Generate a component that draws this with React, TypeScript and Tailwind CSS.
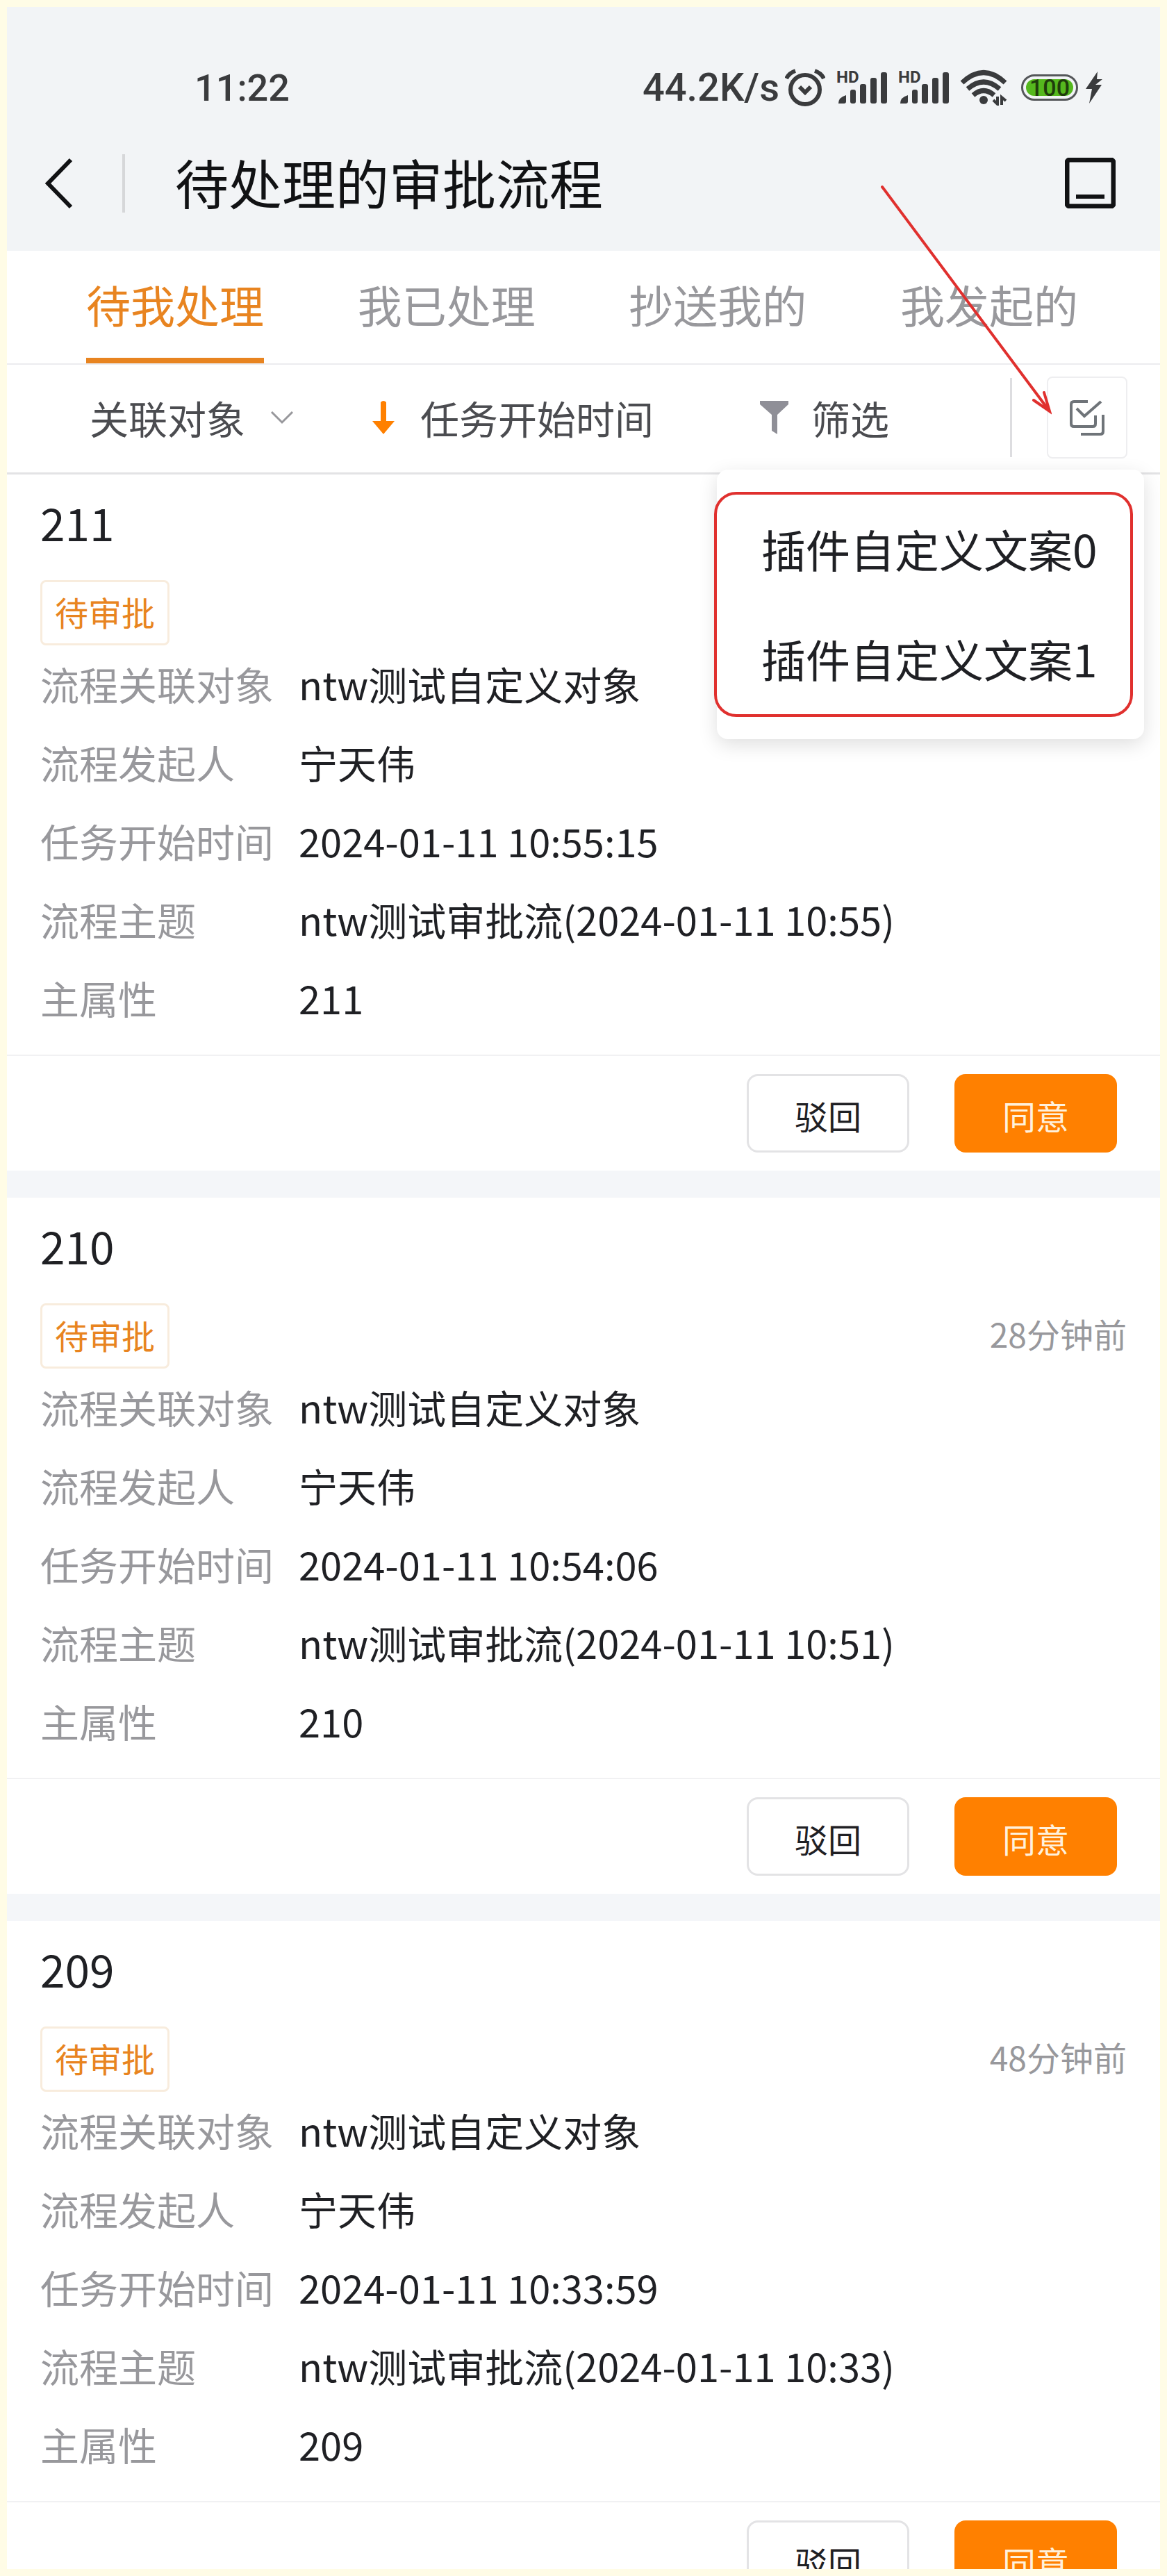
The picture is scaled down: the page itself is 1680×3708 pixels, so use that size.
import React from 'react';

const tabs = ['待我处理', '我已处理', '抄送我的', '我发起的'];

const menuItems = ['插件自定义文案0', '插件自定义文案1'];

const tasks = [
  { id: '211', ago: '', start: '2024-01-11 10:55:15', subject: 'ntw测试审批流(2024-01-11 10:55)' },
  { id: '210', ago: '28分钟前', start: '2024-01-11 10:54:06', subject: 'ntw测试审批流(2024-01-11 10:51)' },
  { id: '209', ago: '48分钟前', start: '2024-01-11 10:33:59', subject: 'ntw测试审批流(2024-01-11 10:33)' },
];

const AlarmIcon = () => (
  <svg width="58" height="54" viewBox="0 0 58 54" fill="none" stroke="#3a3b3d" strokeWidth="6">
    <circle cx="29" cy="30" r="21" />
    <path d="M21 26l8 8 8-8" />
    <path d="M2 14Q6 6 15 3M56 14Q52 6 43 3" />
  </svg>
);

const SignalIcon = () => (
  <svg className="overflow-visible" width="73" height="50" viewBox="0 0 73 50" fill="#3a3b3d">
    <text x="0" y="18" fontSize="24" fontWeight="700" fontFamily="Roboto, sans-serif">HD</text>
    <path d="M3 48q0-9 11-12v9q0 3-3 3z" />
    <rect x="20" y="28" width="8" height="20" rx="3" />
    <rect x="34" y="20" width="9" height="28" rx="3" />
    <rect x="49" y="11" width="9" height="37" rx="3" />
    <rect x="64" y="3" width="9" height="45" rx="3" />
  </svg>
);

const WifiIcon = () => (
  <svg width="68" height="52" viewBox="0 0 68 52" fill="none" stroke="#3a3b3d" strokeWidth="7">
    <path d="M3 19Q34-10 65 19" />
    <path d="M11 28Q34 8 57 28" />
    <path d="M19 37Q34 24 49 37" />
    <circle cx="34" cy="44" r="6" fill="#3a3b3d" stroke="none" />
    <path d="M54 39v11l-6-6M60 51V40l6 5" strokeWidth="4" />
  </svg>
);

const StatusBar = () => (
  <div className="flex h-[88px] items-center justify-between pl-[270px] pr-[82px] font-[Roboto,sans-serif] font-medium text-[#3a3b3d]">
    <span className="text-[54px]">11:22</span>
    <div className="flex items-center text-[56px]">
      <span>44.2K/s</span>
      <div className="ml-2 flex items-center gap-4">
        <AlarmIcon />
        <SignalIcon />
        <SignalIcon />
        <WifiIcon />
      </div>
      <div className="ml-5 flex h-[38px] w-[82px] items-center rounded-full border-[3px] border-[#55575a] p-1">
        <div className="flex h-full w-full items-center justify-center rounded-full bg-[#55b81e] text-[34px] leading-none text-[#1f3d0c]">
          100
        </div>
      </div>
      <svg className="ml-2.5" width="26" height="46" viewBox="0 0 26 46" fill="#3a3b3d">
        <path d="M18 0L1 25h9L6 46l18-27h-9l10-8h-8z" />
      </svg>
    </div>
  </div>
);

const TitleBar = () => (
  <div className="flex h-[191px] items-center pb-1 pl-[54px] pr-16">
    <button type="button" aria-label="返回">
      <svg width="42" height="74" viewBox="0 0 42 74" fill="none" stroke="#111214" strokeWidth="6">
        <path d="M38 3L5 37l33 34" />
      </svg>
    </button>
    <div className="ml-[70px] h-[84px] w-[4px] bg-[#d6d7d9]" />
    <h1 className="ml-[72px] flex-1 pb-1 text-[77px] leading-none text-[#111214]">待处理的审批流程</h1>
    <button type="button" aria-label="最小化">
      <svg width="73" height="73" viewBox="0 0 73 73" fill="none" stroke="#111214" strokeWidth="7">
        <rect x="3" y="3" width="67" height="67" rx="4" />
        <path d="M16 56h41" strokeWidth="6" />
      </svg>
    </button>
  </div>
);

const TabBar = () => (
  <nav className="flex h-[164px] items-stretch justify-between border-b-2 border-[#ececef] pl-[114px] pr-[118px]">
    {tabs.map((tab, i) => (
      <button
        key={tab}
        type="button"
        className={
          i === 0
            ? 'border-b-8 border-[#e88420] pb-0.5 text-[64px] text-[#e88420]'
            : 'border-b-8 border-transparent pb-0.5 text-[64px] text-[#98989c]'
        }
      >
        {tab}
      </button>
    ))}
  </nav>
);

const BatchMenu = () => (
  <div className="absolute -right-6 top-full z-10 mt-4 w-[615px] rounded-2xl bg-white pb-8 pt-8 shadow-[0_8px_28px_rgba(0,0,0,0.13)]">
    <ul className="-ml-1 mr-4 rounded-[32px] border-4 border-[#e0302e]">
      {menuItems.map((item) => (
        <li key={item}>
          <button type="button" className="h-[158px] w-full pb-1 pl-16 text-left text-[64px] text-[#1f2024]">
            {item}
          </button>
        </li>
      ))}
    </ul>
  </div>
);

const FilterBar = () => (
  <div className="flex h-[158px] items-center border-b-3 border-[#e3e3e5] pb-1 pl-[119px] pr-[47px] text-[56px] text-[#4b4c50]">
    <div className="relative w-[294px]">
      <select aria-label="关联对象" className="w-full appearance-none bg-transparent">
        <option>关联对象</option>
      </select>
      <svg className="pointer-events-none absolute right-0 top-1/2 -translate-y-1/2" width="34" height="20" viewBox="0 0 34 20" fill="none" stroke="#98989c" strokeWidth="3">
        <path d="M2 2l15 15L32 2" />
      </svg>
    </div>
    <button type="button" className="ml-[113px] flex items-center gap-[37px]">
      <svg width="32" height="48" viewBox="0 0 32 48" fill="#ff8000">
        <path d="M12 2q4-4 8 0v27h12L16 48 0 29h12z" />
      </svg>
      任务开始时间
    </button>
    <button type="button" className="ml-[153px] flex items-center gap-[33px]">
      <svg width="41" height="48" viewBox="0 0 41 48" fill="#8f8f97">
        <path d="M0 0h41v5L25 20v28l-8-5V20L0 5z" />
      </svg>
      筛选
    </button>
    <div className="ml-auto h-[114px] w-[3px] bg-[#dddde0]" />
    <div className="relative ml-[50px]">
      <button type="button" aria-label="批量操作" className="flex h-[118px] w-[116px] items-center justify-center rounded-lg border-2 border-[#eeeef0]">
        <svg width="52" height="52" viewBox="0 0 52 52" fill="none" stroke="#6f7479" strokeWidth="4">
          <path d="M27 3H7q-4 0-4 4v28q0 4 4 4h27q4 0 4-4V23" />
          <path d="M11 13l11 11L46 3" />
          <path d="M49 22v24q0 4-4 4H17" />
        </svg>
      </button>
      <BatchMenu />
      <svg className="pointer-events-none absolute -top-[277px] right-[109px] z-20" width="248" height="332" viewBox="0 0 248 332" fill="none" stroke="#e0302e" strokeWidth="4" strokeLinecap="round">
        <path d="M4 4l241 323M237 300l8 27-23-16" />
      </svg>
    </div>
  </div>
);

const TaskCard = ({ task }: { task: (typeof tasks)[number] }) => {
  const rows = [
    ['流程关联对象', 'ntw测试自定义对象'],
    ['流程发起人', '宁天伟'],
    ['任务开始时间', task.start],
    ['流程主题', task.subject],
    ['主属性', task.id],
  ];

  return (
    <article className="border-b-[39px] border-[#f4f6f9] bg-white">
      <div className="px-12 pb-[26px] pt-6">
        <h2 className="mb-10 text-[64px] leading-[88px] text-[#1f2024]">{task.id}</h2>
        <div className="-mb-0.5 flex items-center justify-between">
          <span className="flex h-[94px] items-center rounded-lg border-3 border-[#f8ecdd] px-[18px] pb-1 text-[48px] text-[#e88420]">
            待审批
          </span>
          <span className="pb-2 text-[48px] text-[#98989c]">{task.ago}</span>
        </div>
        <dl className="text-[56px] leading-[113px]">
          {rows.map(([label, value]) => (
            <div key={label} className="flex">
              <dt className="w-[372px] text-[#98989c]">{label}</dt>
              <dd className="text-[#1f2024]">{value}</dd>
            </div>
          ))}
        </dl>
      </div>
      <div className="flex justify-end gap-[65px] border-t-2 border-[#f1f1f3] pb-[26px] pr-[62px] pt-[26px] text-[48px]">
        <button type="button" className="h-[113px] w-[234px] rounded-2xl border-3 border-[#e3e3e5] pt-1 text-[#1f2024]">
          驳回
        </button>
        <button type="button" className="h-[113px] w-[234px] rounded-2xl bg-[#ff8000] pt-1 text-[#fff1dc]">
          同意
        </button>
      </div>
    </article>
  );
};

const App = () => {
  return (
    <div className="flex h-screen flex-col border-10 border-[#fffce6] bg-white font-['Noto_Sans_CJK_SC',sans-serif]">
      <header className="bg-[#f2f4f6] pt-[72px]">
        <StatusBar />
        <TitleBar />
      </header>
      <TabBar />
      <FilterBar />
      <main className="min-h-0 flex-1 overflow-y-auto [scrollbar-width:none]">
        {tasks.map((task) => (
          <TaskCard key={task.id} task={task} />
        ))}
      </main>
    </div>
  );
};

export default App;
